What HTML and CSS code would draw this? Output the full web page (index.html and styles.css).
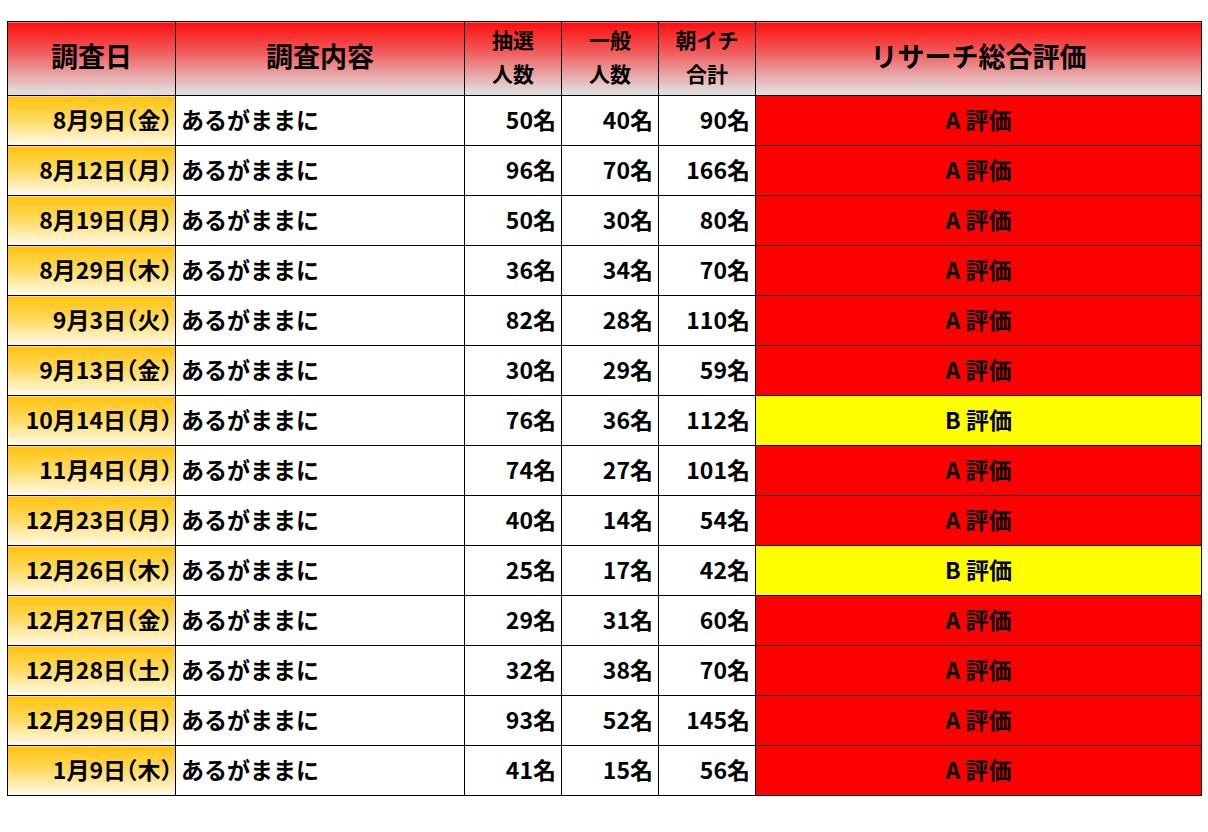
FILE: index.html
```html
<!DOCTYPE html>
<html lang="ja">
<head>
<meta charset="utf-8">
<link rel="stylesheet" href="styles.css">
</head>
<body>
<table class="sheet">
  <colgroup>
    <col class="c-date"><col class="c-content"><col class="c-num"><col class="c-num"><col class="c-num"><col class="c-eval">
  </colgroup>
  <thead>
    <tr>
      <th class="h-big">調査日</th>
      <th class="h-big">調査内容</th>
      <th class="h-small">抽選<br>人数</th>
      <th class="h-small">一般<br>人数</th>
      <th class="h-small">朝イチ<br>合計</th>
      <th class="h-big">リサーチ総合評価</th>
    </tr>
  </thead>
  <tbody>
    <tr><td class="date">8月9日（金）</td><td class="text">あるがままに</td><td class="num">50名</td><td class="num">40名</td><td class="num">90名</td><td class="eval a">A 評価</td></tr>
    <tr><td class="date">8月12日（月）</td><td class="text">あるがままに</td><td class="num">96名</td><td class="num">70名</td><td class="num">166名</td><td class="eval a">A 評価</td></tr>
    <tr><td class="date">8月19日（月）</td><td class="text">あるがままに</td><td class="num">50名</td><td class="num">30名</td><td class="num">80名</td><td class="eval a">A 評価</td></tr>
    <tr><td class="date">8月29日（木）</td><td class="text">あるがままに</td><td class="num">36名</td><td class="num">34名</td><td class="num">70名</td><td class="eval a">A 評価</td></tr>
    <tr><td class="date">9月3日（火）</td><td class="text">あるがままに</td><td class="num">82名</td><td class="num">28名</td><td class="num">110名</td><td class="eval a">A 評価</td></tr>
    <tr><td class="date">9月13日（金）</td><td class="text">あるがままに</td><td class="num">30名</td><td class="num">29名</td><td class="num">59名</td><td class="eval a">A 評価</td></tr>
    <tr><td class="date">10月14日（月）</td><td class="text">あるがままに</td><td class="num">76名</td><td class="num">36名</td><td class="num">112名</td><td class="eval b">B 評価</td></tr>
    <tr><td class="date">11月4日（月）</td><td class="text">あるがままに</td><td class="num">74名</td><td class="num">27名</td><td class="num">101名</td><td class="eval a">A 評価</td></tr>
    <tr><td class="date">12月23日（月）</td><td class="text">あるがままに</td><td class="num">40名</td><td class="num">14名</td><td class="num">54名</td><td class="eval a">A 評価</td></tr>
    <tr><td class="date">12月26日（木）</td><td class="text">あるがままに</td><td class="num">25名</td><td class="num">17名</td><td class="num">42名</td><td class="eval b">B 評価</td></tr>
    <tr><td class="date">12月27日（金）</td><td class="text">あるがままに</td><td class="num">29名</td><td class="num">31名</td><td class="num">60名</td><td class="eval a">A 評価</td></tr>
    <tr><td class="date">12月28日（土）</td><td class="text">あるがままに</td><td class="num">32名</td><td class="num">38名</td><td class="num">70名</td><td class="eval a">A 評価</td></tr>
    <tr><td class="date">12月29日（日）</td><td class="text">あるがままに</td><td class="num">93名</td><td class="num">52名</td><td class="num">145名</td><td class="eval a">A 評価</td></tr>
    <tr><td class="date">1月9日（木）</td><td class="text">あるがままに</td><td class="num">41名</td><td class="num">15名</td><td class="num">56名</td><td class="eval a">A 評価</td></tr>
  </tbody>
</table>
</body>
</html>
```
FILE: styles.css
```css
html, body {
  margin: 0;
  padding: 0;
  background: #ffffff;
}
body {
  padding: 21px 0 0 7px;
  font-family: "Noto Sans CJK JP", "Noto Sans", sans-serif;
  color: #000;
}
.sheet {
  border-collapse: collapse;
  table-layout: fixed;
  width: 1194px;
}
.c-date { width: 168px; }
.c-content { width: 289px; }
.c-num { width: 97px; }
.c-eval { width: 446px; }
.sheet th, .sheet td {
  border: 1px solid #000;
  padding: 0;
  white-space: nowrap;
  overflow: hidden;
}
.sheet thead th {
  height: 68px;
  padding-bottom: 5px;
  background: linear-gradient(to bottom, #ff0d0d 0%, #f15a5a 40%, #e2d6d6 92%, #e0dede 100%);
  font-weight: 700;
  text-align: center;
  vertical-align: middle;
}
.h-big {
  font-size: 27px;
  line-height: 32px;
}
.h-small {
  font-size: 21px;
  line-height: 34px;
}
.sheet tbody td {
  height: 45px;
  padding-bottom: 4px;
  font-size: 23px;
  font-weight: 700;
  vertical-align: middle;
  line-height: 26px;
}
.date {
  text-align: right;
  padding-right: 3px !important;
  font-feature-settings: "halt" 1;
  background: linear-gradient(to bottom, #ffc20e 0%, #ffd95a 45%, #fff6d8 92%, #fffbec 100%);
}
.text {
  text-align: left;
  padding-left: 5px !important;
}
.num {
  text-align: right;
  padding-right: 5px !important;
}
.eval {
  text-align: center;
}
.eval.a { background: #ff0000; }
.eval.b { background: #ffff00; }
```
